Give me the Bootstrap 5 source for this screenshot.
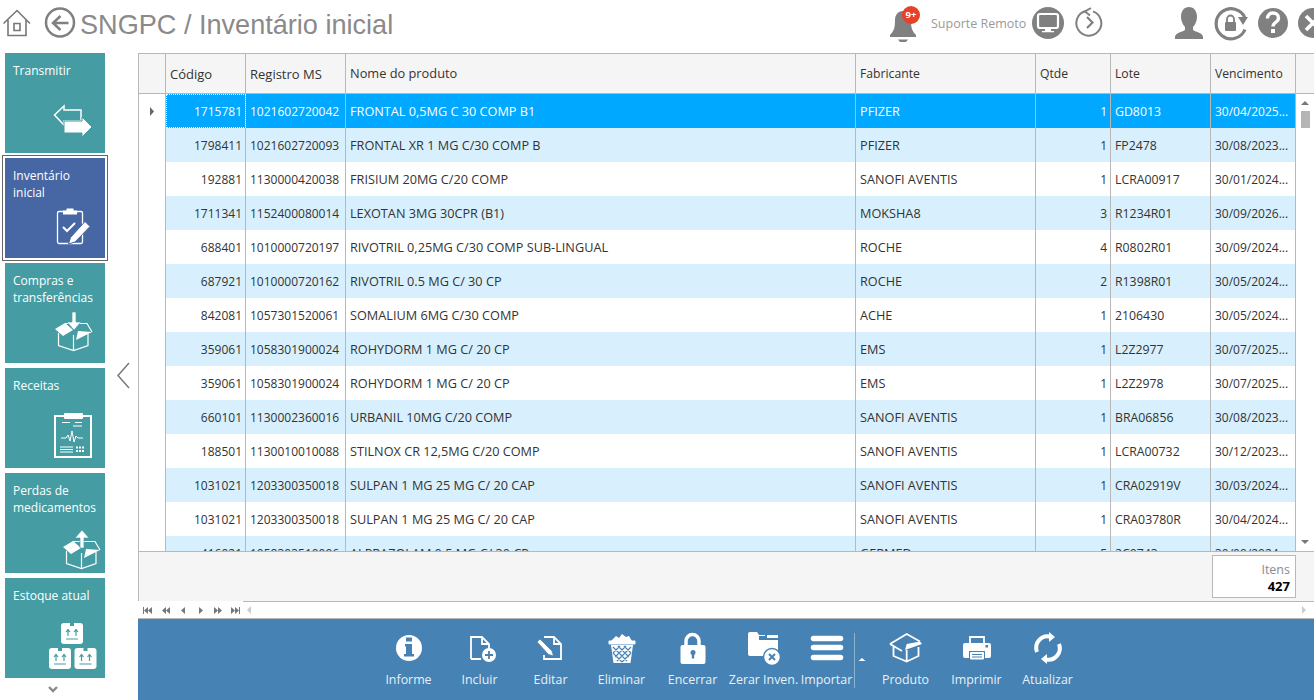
<!DOCTYPE html>
<html lang="pt">
<head>
<meta charset="utf-8">
<title>SNGPC / Inventário inicial</title>
<link href="https://cdn.jsdelivr.net/npm/bootstrap@5.3.0/dist/css/bootstrap.min.css" rel="stylesheet">
<style>
html,body{height:700px;overflow:hidden;background:#fff;}
body{font-family:"Open Sans","Noto Sans",sans-serif;font-size:12px;color:#333;}
svg{display:block;flex-shrink:0;}
.topbar{height:53px;overflow:hidden;}
.page-title{font-family:"Liberation Sans",Arial,sans-serif;font-size:27.1px;color:#8a8a8a;line-height:50px;white-space:nowrap;}
.support-text{color:#9a9a9a;font-size:12.5px;line-height:47px;margin-left:6px;width:97px;white-space:nowrap;}
.top-right{margin-left:auto;margin-right:-16px;flex-shrink:0;}
.bell-wrap{position:relative;width:40px;height:53px;}
.bell-badge{position:absolute;left:17px;top:6px;width:18px;height:18px;border-radius:50%;background:#e8402a;color:#fff;font-size:9.5px;font-weight:700;line-height:18px;text-align:center;}
.gap-a{margin-left:59px;}
.gap-b{margin-left:5px;}
.body-zone{height:647px;}
.side{width:138px;flex-shrink:0;}
.tile-col{width:115px;padding:0 14px 0 5px;}
.tile{width:100px;height:100px;background:#459da3;color:#fff;margin-bottom:5px;line-height:17px;flex-shrink:0;}
.tile.is-on{background:#4667a4;outline:1px solid #666;outline-offset:2px;}
.tile-label{padding:9px 0 0 8px;height:40px;white-space:nowrap;}
.more-chev{height:24px;}
.chev-left{margin-top:306px;}
.main-zone{min-width:0;flex:1;}
.grid-frame{height:499px;border:1px solid #b8b8b8;border-right:0;overflow:hidden;}
.grid-table{width:1157px;table-layout:fixed;margin:0;border-collapse:separate;border-spacing:0;}
.grid-table th,.grid-table td{padding:0 4px;white-space:nowrap;overflow:hidden;vertical-align:middle;font-weight:400;color:#333;border-bottom:0;border-right:1px solid #b8b8b8;background:transparent;box-shadow:none;}
.grid-table thead th{height:40px;background:#f5f5f5;border-bottom:1px solid #b8b8b8;font-size:12.2px;line-height:18px;}
.grid-table thead th:nth-child(2),.grid-table thead th:nth-child(3){font-size:13px;}
.grid-table thead th:nth-child(4){font-size:12.8px;padding-bottom:2px;}
.grid-table tbody td{height:34px;padding-top:2px;line-height:18px;}
.grid-table tbody td:nth-child(4),.grid-table tbody td:nth-child(5){font-size:12.7px;padding-top:0;}
.grid-table tbody td:nth-child(7){font-size:12.3px;}
.grid-table tbody tr:nth-child(even) td:not(.row-head){background:#d8f0fd;}
.grid-table td.row-head{background:#fff;padding:0;}
.grid-table tr.is-sel td:not(.row-head){background:#00a8ff;color:#fff;}
.grid-table tr.is-sel td.is-cur{outline:1px dotted #fff;outline-offset:-1px;}
.grid-table td.num{text-align:right;padding-right:3px;}
.vscroll{width:18px;flex-shrink:0;height:499px;background:#fff;border-bottom:1px solid #b8b8b8;}
.vhead{height:41px;background:#f5f5f5;border-top:1px solid #b8b8b8;border-bottom:1px solid #b8b8b8;}
.arrow-up{margin:7px auto 0;}
.vthumb{width:9px;height:17px;background:#b5b5b5;margin:6px auto 0;}
.arrow-down{margin:auto auto 7px;}
.foot-panel{height:49px;background:#f5f5f5;padding:3px 18px 0 0;border-left:1px solid #b8b8b8;}
.items-box{width:84px;height:43px;background:#fff;border:1px solid #b8b8b8;text-align:right;padding:5px 5px 0 0;line-height:17px;color:#8a8a94;font-size:12.5px;}
.items-box b{display:block;color:#000;font-weight:700;font-size:13px;}
.nav-row{height:18px;border-bottom:1px solid #b8b8b8;}
.nav-strip{width:105px;flex-shrink:0;}
.nav-track{border-top:1px solid #b8b8b8;}
.tool-bar{height:81px;background:#4682b4;padding:9px 0 0 4px;color:#fff;}
.tool-btn{width:71px;flex-shrink:0;text-align:center;line-height:18px;white-space:nowrap;color:#e8f0f7;font-size:12.4px;}
.tool-btn.tool-narrow{width:55px;}
.tool-sep{width:1px;height:55px;margin-top:5px;background:#8cb2d1;flex-shrink:0;}
.tool-caret{width:15px;flex-shrink:0;}
.tool-label{display:block;margin-top:3px;}
</style>
</head>
<body>
<header class="topbar d-flex">
  <svg width="40" height="53" viewBox="0 0 40 53" fill="none" stroke="#777" stroke-width="1.6"><path d="M3.500 23.500 17 10.500l13 13M8 20v15.500h18V20"/><path d="M14 23.500h6v7h-6z"/></svg>
  <svg width="40" height="53" viewBox="40 0 40 53" fill="none" stroke="#808080"><circle cx="60" cy="22.500" r="14" stroke-width="2.500"/><path d="M68.500 23H53M60.500 16l-7.500 7 7.500 7" stroke-width="2.500"/></svg>
  <div class="page-title">SNGPC / Inventário inicial</div>
  <div class="top-right d-flex">
    <div class="bell-wrap">
      <svg width="40" height="53" viewBox="885 0 40 53" fill="#808080"><path d="M903 11c-5 0-8 4-8 9 0 8-1 11-5 15v2h26v-2c-4-4-5-7-5-15 0-5-3-9-8-9z"/><path d="M898 39.500h10l-2 2.500h-6z"/></svg>
      <span class="bell-badge">9+</span>
    </div>
    <span class="support-text">Suporte Remoto</span>
    <svg width="40" height="53" viewBox="1028 0 40 53"><circle cx="1048" cy="23" r="16" fill="#808080"/><rect x="1038" y="14" width="20" height="14" rx="2" fill="none" stroke="#fff" stroke-width="2.200"/><path d="M1045 29h6v2h3v1.200h-12V31h3z" fill="#fff"/></svg>
    <svg width="44" height="53" viewBox="1068 0 44 53" fill="none" stroke="#808080"><path d="M1086 11a12.500 12.500 0 1 0 7 .4" stroke-width="2"/><path d="M1091 8l-6 3.500 5 4" stroke-width="2"/><path d="M1087 17l5.500 5.500-5.500 5.500" stroke-width="2.200"/></svg>
    <svg width="36" height="53" viewBox="1171 0 36 53" class="gap-a" fill="#808080"><path d="M1189 7c-5 0-8 4-8 10 0 4 2 8 4 10v3c-3 2-10 3-10 7v2h28v-2c0-4-7-5-10-7v-3c2-2 4-6 4-10 0-6-3-10-8-10z"/></svg>
    <svg width="43" height="53" viewBox="1212 0 43 53" class="gap-b" fill="none"><path d="M1245 18a15 15 0 1 0 0 11.500" stroke="#808080" stroke-width="3.200"/><path d="M1238 17h10l-5 8z" fill="#808080"/><rect x="1225" y="22" width="11" height="9" rx="1" fill="#808080"/><path d="M1227 22v-3a3.500 3.500 0 0 1 7 0v3" stroke="#808080" stroke-width="1.800"/></svg>
    <svg width="36" height="53" viewBox="1255 0 36 53"><circle cx="1273" cy="23" r="15" fill="#808080"/><path d="M1267.500 18.500c0-3.500 2.500-5.500 5.500-5.500s5.500 2 5.500 5c0 4.500-5.500 4-5.500 8.500" fill="none" stroke="#fff" stroke-width="3.400"/><rect x="1271" y="29" width="4" height="4" fill="#fff"/></svg>
    <svg width="39" height="53" viewBox="1291 0 39 53"><circle cx="1313" cy="23" r="15" fill="#808080"/><path d="M1306 16l14 14m0-14-14 14" stroke="#fff" stroke-width="3.600"/></svg>
  </div>
</header>

<div class="body-zone d-flex">
  <aside class="side d-flex">
    <div class="tile-col d-flex flex-column">
      <div class="tile d-flex flex-column">
        <div class="tile-label">Transmitir</div>
        <svg class="mt-auto" width="100" height="60" viewBox="0 0 100 60"><path d="M49.500 22 59 13v4h17v11H59v4z" fill="none" stroke="#fff" stroke-width="1.500"/><path d="M59 28h18v-4l10 10-10 10v-4H59z" fill="#fff" stroke="#459da3"/></svg>
      </div>
      <div class="tile is-on d-flex flex-column">
        <div class="tile-label">Inventário<br>inicial</div>
        <svg class="mt-auto" width="100" height="60" viewBox="0 0 100 60"><rect x="52.500" y="13.500" width="25" height="32" rx="1.500" fill="none" stroke="#fff" stroke-width="1.300"/><path d="M58 12.500h3.500v-2h7v2H72v4H58z" fill="#fff"/><path d="M58 29l4 4 8-8" fill="none" stroke="#fff" stroke-width="2"/><path d="M80 23.500l5 5L70 44l-6.500 2 2-6.500z" fill="#fff" stroke="#4667a4"/></svg>
      </div>
      <div class="tile d-flex flex-column">
        <div class="tile-label">Compras e<br>transferências</div>
        <svg class="mt-auto" width="100" height="60" viewBox="0 0 100 60"><path d="M53.500 30v12.500l15 5 14.500-5V31M68.500 32v15.500M60 20.500h22l5 8.500" fill="none" stroke="#fff" stroke-width="1.200"/><path d="M50 26l10-6 8 7-10 6zM73 28l14 1-16 8z" fill="#fff"/><path d="M67 9h4v10h5l-7 8-7-8h5z" fill="#fff" stroke="#459da3" stroke-width=".7"/></svg>
      </div>
      <div class="tile d-flex flex-column">
        <div class="tile-label">Receitas</div>
        <svg class="mt-auto" width="100" height="60" viewBox="0 0 100 60"><rect x="50" y="8" width="36" height="41" fill="none" stroke="#fff" stroke-width="2"/><rect x="59" y="5" width="19" height="6" rx="1" fill="#fff"/><path d="M57 14.500h8M70 14.500h7M68 18h9" stroke="#fff"/><path d="M56 30h5l2-3 2 6 2-10 2 11 2-6 2 2h5" fill="none" stroke="#fff"/><path d="M55 39h13M55 41.500h13M55 44h13" stroke="#fff"/><path d="M71 39.500h9M71 43h9" stroke="#fff" stroke-width="2" stroke-dasharray="2 1"/></svg>
      </div>
      <div class="tile d-flex flex-column">
        <div class="tile-label">Perdas de<br>medicamentos</div>
        <svg class="mt-auto" width="100" height="60" viewBox="0 0 100 60"><g transform="translate(8 8)"><path d="M53.500 30v12.500l15 5 14.500-5V31M68.500 32v15.500M60 20.500h22l5 8.500" fill="none" stroke="#fff" stroke-width="1.200"/><path d="M50 26l10-6 8 7-10 6zM73 28l14 1-16 8z" fill="#fff"/><path d="M67 27h4V17h5l-7-8-7 8h5z" fill="#fff" stroke="#459da3" stroke-width=".7"/></g></svg>
      </div>
      <div class="tile d-flex flex-column mb-0">
        <div class="tile-label">Estoque atual</div>
        <svg class="mt-auto" width="100" height="60" viewBox="0 0 100 60">
          <defs><g id="stockbox"><rect width="22" height="21" rx="3" fill="#fff"/><path d="M9 0h4v3H9z" fill="#459da3"/><path d="M7 13V7.500M5 9l2-2.500L9 9M15 13V7.500M13 9l2-2.500L17 9M5 16h12" fill="none" stroke="#459da3" stroke-width="1.200"/></g></defs>
          <use href="#stockbox" x="56" y="5"/><use href="#stockbox" x="44" y="30"/><use href="#stockbox" x="69.500" y="30"/>
        </svg>
      </div>
      <div class="more-chev d-flex justify-content-center align-items-center"><svg width="10" height="7" viewBox="0 0 10 7"><path d="M1 1l4 4 4-4" fill="none" stroke="#8a8a8a" stroke-width="2.400"/></svg></div>
    </div>
    <div class="flex-grow-1 d-flex align-items-start">
      <svg class="chev-left" width="20" height="40" viewBox="0 0 20 40"><path d="M14 4 3 16.500 14 29" fill="none" stroke="#7a7a7a" stroke-width="1.500"/></svg>
    </div>
  </aside>

  <main class="main-zone d-flex flex-column">
    <div class="d-flex">
      <div class="grid-frame flex-grow-1">
        <table class="table grid-table">
          <colgroup><col style="width:27px"><col style="width:80px"><col style="width:100px"><col style="width:510px"><col style="width:180px"><col style="width:75px"><col style="width:100px"><col style="width:85px"></colgroup>
          <thead><tr><th></th><th>Código</th><th>Registro MS</th><th>Nome do produto</th><th>Fabricante</th><th>Qtde</th><th>Lote</th><th>Vencimento</th></tr></thead>
          <tbody>
            <tr class="is-sel"><td class="row-head"><svg class="mx-auto" width="6" height="9" viewBox="0 0 6 9"><path d="M1 0l4 4.500L1 9z" fill="#666"/></svg></td><td class="num is-cur">1715781</td><td>1021602720042</td><td>FRONTAL 0,5MG C 30 COMP B1</td><td>PFIZER</td><td class="num">1</td><td>GD8013</td><td>30/04/2025...</td></tr>
            <tr><td class="row-head"></td><td class="num">1798411</td><td>1021602720093</td><td>FRONTAL XR 1 MG C/30 COMP B</td><td>PFIZER</td><td class="num">1</td><td>FP2478</td><td>30/08/2023...</td></tr>
            <tr><td class="row-head"></td><td class="num">192881</td><td>1130000420038</td><td>FRISIUM 20MG C/20 COMP</td><td>SANOFI AVENTIS</td><td class="num">1</td><td>LCRA00917</td><td>30/01/2024...</td></tr>
            <tr><td class="row-head"></td><td class="num">1711341</td><td>1152400080014</td><td>LEXOTAN 3MG 30CPR (B1)</td><td>MOKSHA8</td><td class="num">3</td><td>R1234R01</td><td>30/09/2026...</td></tr>
            <tr><td class="row-head"></td><td class="num">688401</td><td>1010000720197</td><td>RIVOTRIL 0,25MG C/30 COMP SUB-LINGUAL</td><td>ROCHE</td><td class="num">4</td><td>R0802R01</td><td>30/09/2024...</td></tr>
            <tr><td class="row-head"></td><td class="num">687921</td><td>1010000720162</td><td>RIVOTRIL 0.5 MG C/ 30 CP</td><td>ROCHE</td><td class="num">2</td><td>R1398R01</td><td>30/05/2024...</td></tr>
            <tr><td class="row-head"></td><td class="num">842081</td><td>1057301520061</td><td>SOMALIUM 6MG C/30 COMP</td><td>ACHE</td><td class="num">1</td><td>2106430</td><td>30/05/2024...</td></tr>
            <tr><td class="row-head"></td><td class="num">359061</td><td>1058301900024</td><td>ROHYDORM 1 MG C/ 20 CP</td><td>EMS</td><td class="num">1</td><td>L2Z2977</td><td>30/07/2025...</td></tr>
            <tr><td class="row-head"></td><td class="num">359061</td><td>1058301900024</td><td>ROHYDORM 1 MG C/ 20 CP</td><td>EMS</td><td class="num">1</td><td>L2Z2978</td><td>30/07/2025...</td></tr>
            <tr><td class="row-head"></td><td class="num">660101</td><td>1130002360016</td><td>URBANIL 10MG C/20 COMP</td><td>SANOFI AVENTIS</td><td class="num">1</td><td>BRA06856</td><td>30/08/2023...</td></tr>
            <tr><td class="row-head"></td><td class="num">188501</td><td>1130010010088</td><td>STILNOX CR 12,5MG C/20 COMP</td><td>SANOFI AVENTIS</td><td class="num">1</td><td>LCRA00732</td><td>30/12/2023...</td></tr>
            <tr><td class="row-head"></td><td class="num">1031021</td><td>1203300350018</td><td>SULPAN 1 MG 25 MG C/ 20 CAP</td><td>SANOFI AVENTIS</td><td class="num">1</td><td>CRA02919V</td><td>30/03/2024...</td></tr>
            <tr><td class="row-head"></td><td class="num">1031021</td><td>1203300350018</td><td>SULPAN 1 MG 25 MG C/ 20 CAP</td><td>SANOFI AVENTIS</td><td class="num">1</td><td>CRA03780R</td><td>30/04/2024...</td></tr>
            <tr><td class="row-head"></td><td class="num">416021</td><td>1058303510096</td><td>ALPRAZOLAM 0,5 MG C/ 30 CP</td><td>GERMED</td><td class="num">5</td><td>2C0743</td><td>30/09/2024...</td></tr>
          </tbody>
        </table>
      </div>
      <div class="vscroll d-flex flex-column">
        <div class="vhead"></div>
        <svg class="arrow-up" width="8" height="4" viewBox="0 0 8 4"><path d="M0 4 4 0l4 4z" fill="#777"/></svg>
        <div class="vthumb"></div>
        <svg class="arrow-down" width="8" height="4" viewBox="0 0 8 4"><path d="M0 0h8L4 4z" fill="#777"/></svg>
      </div>
    </div>
    <div class="foot-panel d-flex justify-content-end">
      <div class="items-box">Itens<b>427</b></div>
    </div>
    <div class="nav-row d-flex">
      <div class="nav-strip">
        <svg width="105" height="17" viewBox="0 0 105 17" fill="#777"><path d="M5 6h1v7H5zM10 6v7L6 9.500zM14 6v7l-4-3.500zM28 6v7l-4-3.500zM32 6v7l-4-3.500zM47 6v7l-4-3.500zM61 6v7l4-3.500zM76 6v7l4-3.500zM80 6v7l4-3.500zM93 6v7l4-3.500zM97 6v7l4-3.500zM101 6h1v7h-1z"/></svg>
      </div>
      <div class="nav-track flex-grow-1 d-flex justify-content-between align-items-center px-1">
        <svg width="5" height="8" viewBox="0 0 5 8"><path d="M4 0v8L0 4z" fill="#ccc"/></svg>
        <svg width="5" height="8" viewBox="0 0 5 8" class="me-1"><path d="M1 0v8l4-4z" fill="#ccc"/></svg>
      </div>
    </div>
    <div class="tool-bar d-flex justify-content-center">
      <div class="tool-btn"><svg width="71" height="40" viewBox="0 0 71 40"><circle cx="36" cy="20" r="13" fill="#fff"/><path d="M33 9.500h6v4h-6zM32 16h7v10h2v2.500H31V26h2v-7.500h-1z" fill="#4682b4"/></svg><span class="tool-label">Informe</span></div>
      <div class="tool-btn"><svg width="71" height="40" viewBox="0 0 71 40"><path d="M27 31V9h11l7 7v8M27 31h10M38 9v7h7" fill="none" stroke="#fff" stroke-width="1.800"/><circle cx="45" cy="27" r="7" fill="#fff"/><path d="M45 23v8m-4-4h8" stroke="#4682b4" stroke-width="1.800"/></svg><span class="tool-label">Incluir</span></div>
      <div class="tool-btn"><svg width="71" height="40" viewBox="0 0 71 40"><path d="M29 9h10l7 7v15H29v-4M39 9v7h7" fill="none" stroke="#fff" stroke-width="1.800"/><path d="M22 14l3-3 12 12 1.500 5-5-1.500z" fill="#fff" stroke="#4682b4" stroke-width=".8"/></svg><span class="tool-label">Editar</span></div>
      <div class="tool-btn"><svg width="71" height="40" viewBox="0 0 71 40"><path d="M25 13l5-5 3 2 3-4 4 3 3-1 3 5z" fill="#fff"/><rect x="22.500" y="12.500" width="27" height="4" rx="1" fill="#fff"/><path d="M25 17l2.500 18h17L47 17z" fill="#fff"/><path d="M27 19l14 14M32 18l11 11M38 18l7 7M27 25l9 9M45 19 31 33M40 18 29 29M34 18l-7 7M45 25l-9 9" stroke="#4682b4" stroke-width="1.200" fill="none"/></svg><span class="tool-label">Eliminar</span></div>
      <div class="tool-btn"><svg width="71" height="40" viewBox="0 0 71 40"><path d="M29 18v-5a6.500 6.500 0 0 1 13 0v5" fill="none" stroke="#fff" stroke-width="3.500"/><rect x="23.500" y="17" width="25" height="19" rx="2" fill="#fff"/><circle cx="36" cy="24.500" r="2.500" fill="#4682b4"/><path d="M34.800 25h2.400v5.500h-2.400z" fill="#4682b4"/></svg><span class="tool-label">Encerrar</span></div>
      <div class="tool-btn"><svg width="71" height="40" viewBox="0 0 71 40"><path d="M20 6a2 2 0 0 1 2-2h7l2 3h6v1H31v4h19v16H22a2 2 0 0 1-2-2zM39 7h11v3H39z" fill="#fff"/><circle cx="44" cy="29" r="8.500" fill="#fff" stroke="#4682b4" stroke-width="1.500"/><path d="M41 26l6 6m0-6-6 6" stroke="#4682b4" stroke-width="2"/></svg><span class="tool-label">Zerar Inven.</span></div>
      <div class="tool-btn tool-narrow"><svg width="55" height="40" viewBox="0 0 55 40"><path d="M14.500 10.500h27M14.500 19.500h27M14.500 29.500h27" stroke="#fff" stroke-width="5.500" stroke-linecap="round"/></svg><span class="tool-label">Importar</span></div>
      <div class="tool-sep"></div>
      <div class="tool-caret"><svg width="15" height="40" viewBox="0 0 15 40"><path d="M3.500 33l3.500-3 3.500 3z" fill="#fff"/></svg></div>
      <div class="tool-btn"><svg width="71" height="40" viewBox="0 0 71 40"><path d="M23.500 17v11l13.200 5.500L48.500 28v-9M36.700 22v11.500M20 16 36.700 6 50 13.500M20 16l12 7" fill="none" stroke="#fff" stroke-width="1.800"/><path d="M36.700 16 50 13.500l2 2.500-17 6z" fill="#fff"/></svg><span class="tool-label">Produto</span></div>
      <div class="tool-btn"><svg width="71" height="40" viewBox="0 0 71 40"><path d="M29 16V9h14v7" fill="none" stroke="#fff" stroke-width="1.800"/><path d="M24 15h24a2 2 0 0 1 2 2v11a2 2 0 0 1-2 2h-4v-7H28v7h-4a2 2 0 0 1-2-2V17a2 2 0 0 1 2-2z" fill="#fff"/><path d="M29.500 24.500h13v6.500h-13z" fill="#fff" stroke="#fff"/><path d="M31 26.500h10M31 29h10" stroke="#4682b4"/><rect x="44.500" y="17" width="2.500" height="2.500" fill="#4682b4"/></svg><span class="tool-label">Imprimir</span></div>
      <div class="tool-btn"><svg width="71" height="40" viewBox="0 0 71 40"><path d="M25 24a11.500 11.500 0 0 1 13-15.500M47 16a11.500 11.500 0 0 1-13 15.500" fill="none" stroke="#fff" stroke-width="4"/><path d="M37 4v10l6-5zM35 26v10l-6-5z" fill="#fff"/></svg><span class="tool-label">Atualizar</span></div>
    </div>
  </main>
</div>
<script src="https://cdn.jsdelivr.net/npm/bootstrap@5.3.0/dist/js/bootstrap.bundle.min.js"></script>
</body>
</html>
